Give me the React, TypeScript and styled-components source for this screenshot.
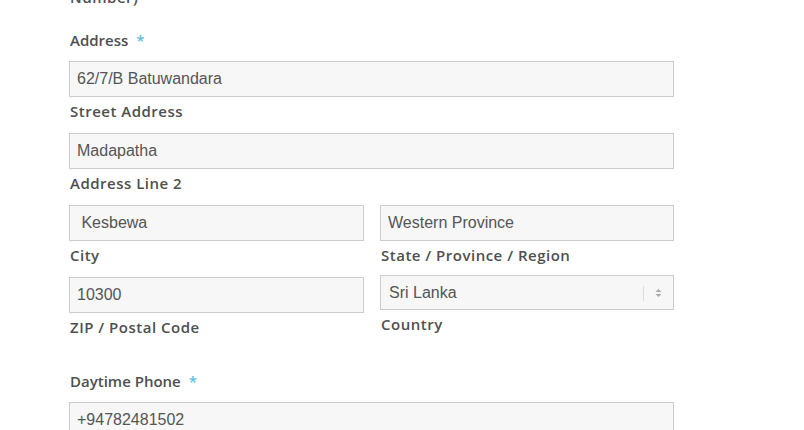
import React from "react";
import styled, { createGlobalStyle } from "styled-components";

const Global = createGlobalStyle`
  html, body { margin: 0; padding: 0; background: #fff; }
  body { overflow: hidden; }
`;

const Page = styled.div`
  width: 804px;
  height: 430px;
  overflow: hidden;
  padding-left: 69px;
  box-sizing: border-box;
  font-family: "Open Sans", "Liberation Sans", sans-serif;
`;

const Form = styled.div`
  width: 605px;
  display: flex;
  flex-direction: column;
`;

const Field = styled.div<{ $mb?: number }>`
  display: flex;
  flex-direction: column;
  margin-bottom: ${(p) => p.$mb ?? 34}px;
`;

const Label = styled.div`
  font-size: 15px;
  font-weight: 600;
  line-height: 20px;
  letter-spacing: 0;
  color: #4f4f4f;
  margin-bottom: 11px;
  padding-left: 1px;
`;

const Req = styled.span`
  color: #5bc0de;
  margin-left: 8px;
  font-weight: 600;
`;

const Sub = styled.div<{ $mt?: number }>`
  font-size: 15px;
  font-weight: 600;
  line-height: 20px;
  letter-spacing: 0.5px;
  color: #4f4f4f;
  margin-top: ${(p) => p.$mt ?? 4}px;
  padding-left: 1px;
`;

const Group = styled.div<{ $mb?: number }>`
  display: flex;
  flex-direction: column;
  margin-bottom: ${(p) => p.$mb ?? 12}px;
`;

const Input = styled.input`
  box-sizing: border-box;
  width: 100%;
  height: 36px;
  margin: 0;
  border: 1px solid #cccccc;
  border-radius: 0;
  background: #f7f7f7;
  padding: 0 7px;
  font-family: "Liberation Sans", Arial, sans-serif;
  font-size: 16px;
  color: #555;
  outline: none;
`;

const Row = styled.div`
  display: grid;
  grid-template-columns: 295px 294px;
  column-gap: 16px;
`;

const Col = styled.div`
  display: flex;
  flex-direction: column;
`;

const SelectWrap = styled.div`
  position: relative;
`;

const Select = styled.select`
  box-sizing: border-box;
  width: 100%;
  height: 35px;
  margin: 0;
  appearance: none;
  -webkit-appearance: none;
  border: 1px solid #cccccc;
  border-radius: 0;
  background: #f7f7f7;
  padding: 0 40px 0 8px;
  font-family: "Liberation Sans", Arial, sans-serif;
  font-size: 16px;
  color: #555;
  outline: none;
`;

const Arrow = styled.div`
  position: absolute;
  right: 0;
  top: 0;
  bottom: 0;
  width: 31px;
  display: flex;
  align-items: center;
  justify-content: center;
  pointer-events: none;
  &::before {
    content: "";
    position: absolute;
    left: 0;
    top: 11px;
    bottom: 9px;
    border-left: 1px solid #dcdcdc;
  }
`;

const Top = styled.div`
  font-size: 15px;
  font-weight: 600;
  line-height: 20px;
  letter-spacing: 0.5px;
  color: #4f4f4f;
  margin-top: -13px;
  margin-bottom: 23px;
  padding-left: 1px;
`;

export default function App() {
  return (
    <Page>
      <Global />
      <Form>
        <Top>Number)</Top>
        <Field>
          <Label>
            Address<Req>*</Req>
          </Label>
          <Group>
            <Input defaultValue="62/7/B Batuwandara" />
            <Sub>Street Address</Sub>
          </Group>
          <Group>
            <Input defaultValue="Madapatha" />
            <Sub>Address Line 2</Sub>
          </Group>
          <Row>
            <Col>
              <Group>
                <Input defaultValue=" Kesbewa" />
                <Sub>City</Sub>
              </Group>
              <Group $mb={0}>
                <Input defaultValue="10300" />
                <Sub>ZIP / Postal Code</Sub>
              </Group>
            </Col>
            <Col>
              <Group $mb={10}>
                <Input defaultValue="Western Province" />
                <Sub>State / Province / Region</Sub>
              </Group>
              <Group $mb={0}>
                <SelectWrap>
                  <Select defaultValue="LK">
                    <option value="LK">Sri Lanka</option>
                  </Select>
                  <Arrow>
                    <svg width="7" height="10" viewBox="0 0 7 10">
                      <path d="M3.5 1 L6.5 4 H0.5 Z" fill="#aaa" />
                      <path d="M3.5 9 L6.5 6 H0.5 Z" fill="#aaa" />
                    </svg>
                  </Arrow>
                </SelectWrap>
                <Sub>Country</Sub>
              </Group>
            </Col>
          </Row>
        </Field>
        <Field $mb={0}>
          <Label>
            Daytime Phone<Req>*</Req>
          </Label>
          <Input defaultValue="+94782481502" />
        </Field>
      </Form>
    </Page>
  );
}
